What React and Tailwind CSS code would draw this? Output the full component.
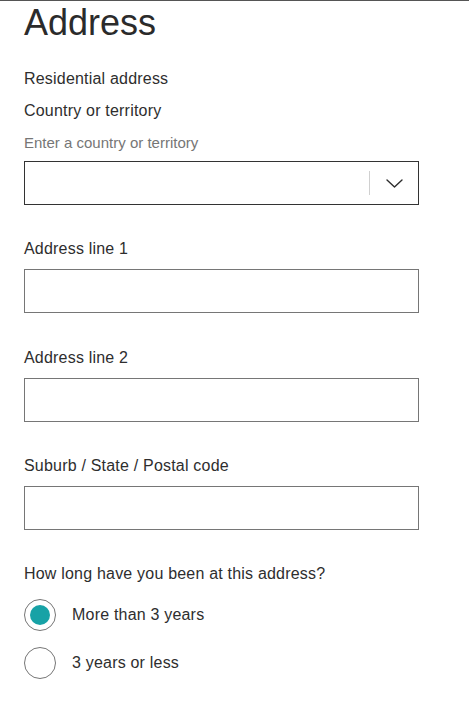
import { useState } from "react";

const FONT = { fontFamily: '"Liberation Sans", Arial, sans-serif' };

const TextField = ({ label, top = "mt-8" }) => (
  <div className={top}>
    <label className="block text-[16px] leading-6 tracking-[0.2px] text-[#2e2e2e] mb-2">
      {label}
    </label>
    <input
      type="text"
      className="block w-[395px] h-11 border border-[#767676] bg-white outline-none px-3 text-[16px]"
    />
  </div>
);

const Radio = ({ label, checked, onSelect }) => (
  <button
    type="button"
    onClick={onSelect}
    className="flex items-center gap-4 text-left cursor-pointer"
  >
    <span className="flex items-center justify-center w-8 h-8 rounded-full border border-[#767676] bg-white">
      {checked && <span className="w-5 h-5 rounded-full bg-[#17a2a6]" />}
    </span>
    <span className="text-[16px] leading-6 tracking-[0.2px] text-[#2e2e2e]">
      {label}
    </span>
  </button>
);

export default function App() {
  const [duration, setDuration] = useState("more");

  return (
    <div
      className="min-h-[708px] w-[469px] bg-white border-t border-[#555555] pl-6 pb-6"
      style={FONT}
    >
      <h1 className="text-[36px] leading-[44px] font-normal text-[#2b2b2b] mb-[22px]">
        Address
      </h1>
      <p className="text-[16px] leading-6 tracking-[0.2px] text-[#2e2e2e] mb-2">
        Residential address
      </p>
      <p className="text-[16px] leading-6 tracking-[0.2px] text-[#2e2e2e] mb-[10px]">
        Country or territory
      </p>
      <p className="text-[15px] leading-5 text-[#767676] mb-2">
        Enter a country or territory
      </p>
      <div className="flex items-center w-[395px] h-11 border border-[#333333] bg-white">
        <div className="flex-1" />
        <div className="w-px h-6 bg-[#d0d0d0]" />
        <div className="w-12 flex items-center justify-center">
          <svg width="17" height="9" viewBox="0 0 17 9" fill="none">
            <path
              d="M1 1l7.5 7 7.5-7"
              stroke="#2e2e2e"
              strokeWidth="1.4"
              strokeLinecap="round"
              strokeLinejoin="round"
            />
          </svg>
        </div>
      </div>

      <TextField label="Address line 1" />
      <TextField label="Address line 2" top="mt-[33px]" />
      <TextField label="Suburb / State / Postal code" />

      <p className="mt-8 text-[16px] leading-6 tracking-[0.2px] text-[#2e2e2e] mb-[13px]">
        How long have you been at this address?
      </p>
      <div className="flex flex-col items-start gap-4">
        <Radio
          label="More than 3 years"
          checked={duration === "more"}
          onSelect={() => setDuration("more")}
        />
        <Radio
          label="3 years or less"
          checked={duration === "less"}
          onSelect={() => setDuration("less")}
        />
      </div>
    </div>
  );
}
